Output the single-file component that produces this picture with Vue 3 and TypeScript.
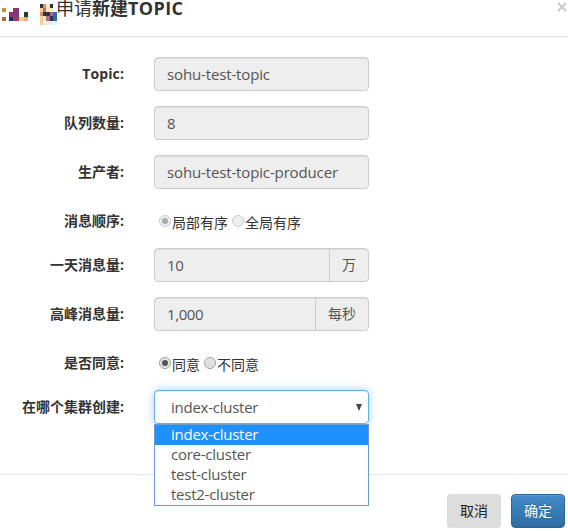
<script setup lang="ts">
import { ref } from 'vue'

interface Pixel { x: number; y: number; w: number; h: number; c: string }

const order = ref('局部有序')
const agree = ref('同意')
const cluster = ref('index-cluster')
const orders = ['局部有序', '全局有序']
const answers = ['同意', '不同意']
const clusters = ['index-cluster', 'core-cluster', 'test-cluster', 'test2-cluster']

const px = (x: number, y: number, w: number, h: number, c: string): Pixel => ({ x, y, w, h, c })
const mosaic: Pixel[] = [
  px(1, 2, 1, 2, '#ffe4b0'), px(2, 8, 4, 4, '#c99235'), px(2, 17, 4, 4, '#b36a32'),
  px(9, 12, 4, 5, '#87367a'), px(9, 17, 4, 4, '#292c68'), px(13, 8, 6, 9, '#87367a'), px(13, 17, 6, 4, '#963a68'),
  px(19, 12, 5, 5, '#f4ffff'), px(19, 17, 5, 4, '#ffc98d'), px(24, 12, 4, 5, '#303438'), px(24, 17, 4, 4, '#efaa75'),
  px(40, 4, 3, 4, '#303438'), px(43, 4, 3, 4, '#da9270'), px(46, 4, 4, 9, '#ffeab8'), px(50, 4, 3, 4, '#303438'),
  px(40, 8, 3, 5, '#ffc98d'), px(43, 8, 3, 4, '#a96a9c'), px(50, 8, 3, 4, '#ffeab8'),
  px(40, 12, 3, 4, '#d49577'), px(43, 12, 3, 4, '#303438'), px(46, 12, 4, 4, '#303438'), px(50, 12, 3, 4, '#a96a9c'), px(53, 12, 4, 4, '#3265bc'),
  px(35, 16, 5, 5, '#eaffff'), px(40, 16, 3, 9, '#ffca93'), px(43, 16, 3, 4, '#ffeab8'), px(46, 16, 4, 5, '#a96a9c'), px(50, 16, 3, 5, '#303438'), px(53, 16, 4, 5, '#3265bc'),
  px(43, 20, 3, 5, '#d8f8ff'), px(46, 21, 4, 4, '#ffeab8'), px(50, 21, 7, 4, '#d8f8ff'), px(53, 8, 4, 4, '#f7fdff')
]
</script>

<template>
  <div class="modal">
    <header class="header">
      <svg class="mosaic" width="57" height="26" viewBox="0 0 57 26" shape-rendering="crispEdges">
        <rect v-for="(p, i) in mosaic" :key="i" :x="p.x" :y="p.y" :width="p.w" :height="p.h" :fill="p.c" />
      </svg>
      <h4 class="title">申请<b>新建<span class="latin">TOPIC</span></b></h4>
      <button class="close" aria-label="Close">
        <svg width="10" height="10" viewBox="0 0 10 10"><path d="M1 1L9 9M9 1L1 9" stroke="#ccc" stroke-width="2.2" /></svg>
      </button>
    </header>
    <form class="body" @submit.prevent>
      <div class="row">
        <label class="label topic">Topic:</label>
        <div class="control disabled"><span class="value">sohu-test-topic</span></div>
      </div>
      <div class="row">
        <label class="label">队列数量:</label>
        <div class="control disabled"><span class="value">8</span></div>
      </div>
      <div class="row">
        <label class="label">生产者:</label>
        <div class="control disabled"><span class="value">sohu-test-topic-producer</span></div>
      </div>
      <div class="row choice">
        <label class="label">消息顺序:</label>
        <div class="radios">
          <label v-for="o in orders" :key="o" class="radio off"><i class="dot" :class="{ on: order === o }"></i>{{ o }}</label>
        </div>
      </div>
      <div class="row">
        <label class="label">一天消息量:</label>
        <div class="control disabled"><span class="value number">10</span><span class="addon">万</span></div>
      </div>
      <div class="row">
        <label class="label">高峰消息量:</label>
        <div class="control disabled"><span class="value number">1,000</span><span class="addon">每秒</span></div>
      </div>
      <div class="row choice">
        <label class="label">是否同意:</label>
        <div class="radios">
          <label v-for="a in answers" :key="a" class="radio" @click="agree = a"><i class="dot" :class="{ on: agree === a }"></i>{{ a }}</label>
        </div>
      </div>
      <div class="row">
        <label class="label">在哪个集群创建:</label>
        <div class="control select">
          <span class="value">{{ cluster }}</span>
          <svg class="caret" width="6" height="7" viewBox="0 0 6 7"><path d="M0 0H6L3 7Z" fill="#444" /></svg>
          <ul class="menu">
            <li v-for="c in clusters" :key="c" :class="{ active: c === cluster }" @click="cluster = c">{{ c }}</li>
          </ul>
        </div>
      </div>
    </form>
    <footer class="footer">
      <button class="btn">取消</button>
      <button class="btn primary">确定</button>
    </footer>
  </div>
</template>

<style>
body { background: #fff; overflow: hidden; }
</style>

<style scoped>
* { box-sizing: border-box; }
.modal { width: 568px; height: 531px; color: #333; font: 14px/20px "Open Sans", "Noto Sans CJK SC", sans-serif; }
.header { display: flex; align-items: flex-start; height: 37px; border-bottom: 1px solid #e5e5e5; }
.mosaic { display: block; flex: none; }
.title { margin: 0 0 0 -1px; flex: 1; font-size: 18px; line-height: 16px; font-weight: 400; white-space: nowrap; }
.title b { font-weight: 700; }
.latin { letter-spacing: .4px; }
.close { margin: 2px 1px 0 0; padding: 0; border: 0; background: none; height: 10px; line-height: 0; }
.body { height: 437px; padding-top: 20px; }
.row { display: flex; height: 34px; margin-bottom: 15px; }
.row.choice { height: 29px; }
.label { width: 124px; margin-right: 30px; padding-top: 7px; text-align: right; font-weight: 700; white-space: nowrap; }
.topic { letter-spacing: .1px; }
.control { display: flex; position: relative; width: 215px; height: 34px; border: 1px solid #ccc; border-radius: 4px; color: #555; font-size: 15px; letter-spacing: -.14px; }
.disabled { background: #eee; box-shadow: inset 0 1px 1px rgba(0, 0, 0, .075); }
.value { flex: 1; padding: 6px 12px 0; line-height: 20px; white-space: nowrap; }
.number { letter-spacing: -.4px; }
.addon { padding: 6px 12px 0; border-left: 1px solid #ccc; font-size: 14px; letter-spacing: 0; }
.radios { display: flex; gap: 4px; padding: 9px 0 0 5px; }
.radio { display: flex; align-items: flex-start; height: 20px; white-space: nowrap; }
.dot { display: flex; flex: none; width: 12px; height: 12px; margin: 2px 1px 0 0; border: 1px solid #999; border-radius: 50%; background: linear-gradient(#e4e4e4, #dcdcdc); align-items: center; justify-content: center; box-shadow: inset 0 0 0 1px #f0f0f0; }
.dot.on::after { content: ""; width: 6px; height: 6px; border-radius: 50%; background: #555; }
.off .dot { border-color: #ccc; background: #eee; }
.off .dot.on::after { background: #aaa; }
.select { border-color: #66afe9; background: #fff; box-shadow: inset 0 1px 1px rgba(0, 0, 0, .075), 0 0 8px rgba(102, 175, 233, .6); letter-spacing: -.25px; }
.select .value { padding-left: 16px; }
.caret { margin: 13px 6px 0 0; }
.menu { position: absolute; z-index: 2; left: -1px; top: 33px; width: 215px; height: 82px; margin: 0; padding: 0; border: 1px solid #6f99cf; background: #fff; list-style: none; }
.menu li { height: 20px; padding-left: 16px; line-height: 18px; }
.menu .active { background: #1e90ff; color: #fff; }
.footer { display: flex; justify-content: flex-end; gap: 10px; height: 57px; padding: 19px 3px 0 0; border-top: 1px solid #e5e5e5; }
.btn { width: 54px; height: 34px; padding: 0; border: 0; border-radius: 4px; background: #ddd; color: #222; font: inherit; }
.primary { border: 1px solid #2b669a; background: linear-gradient(#428bca, #2d6ca2); color: #fff; text-shadow: 0 -1px 0 rgba(0, 0, 0, .2); box-shadow: inset 0 1px 0 rgba(255, 255, 255, .15); }
</style>
